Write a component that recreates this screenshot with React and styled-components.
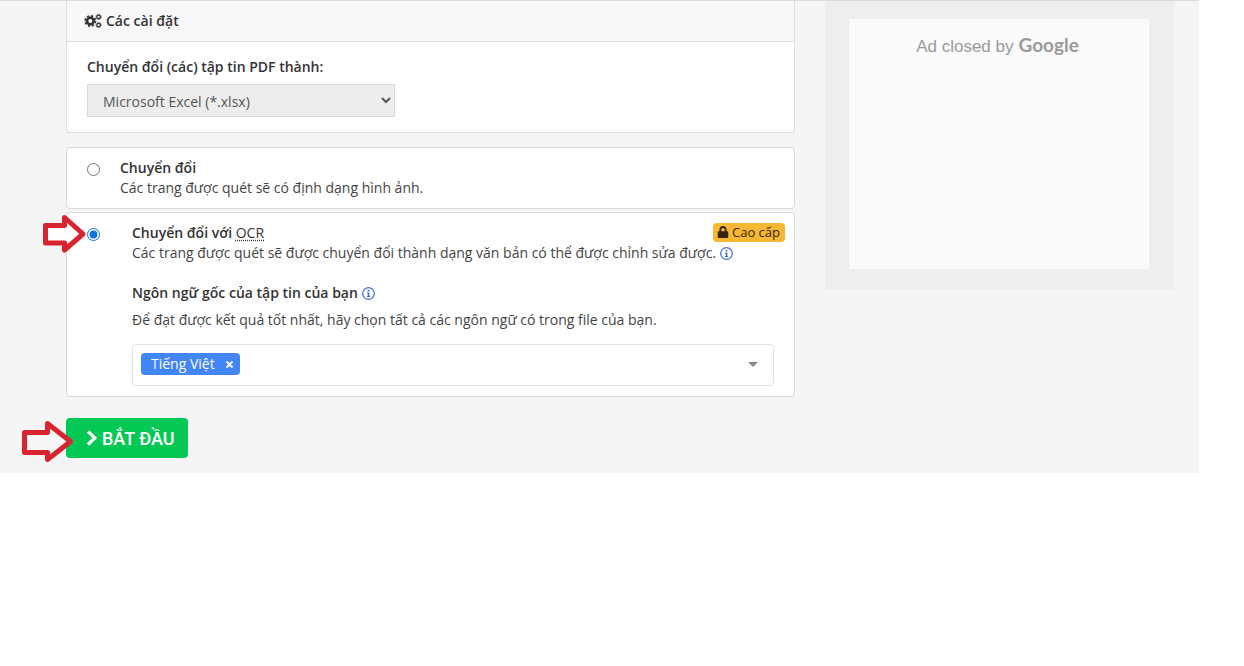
import { useState } from "react";
import styled, { createGlobalStyle } from "styled-components";
import { FaLock } from "react-icons/fa";

const GlobalStyle = createGlobalStyle`
  *, *::before, *::after {
    box-sizing: border-box;
  }
  body {
    margin: 0;
    background: #fff;
    color: #333;
    font-family: "Open Sans", "Noto Sans", sans-serif;
    font-size: 14px;
    line-height: 20px;
  }
`;

const Page = styled.div`
  display: grid;
  grid-template-columns: minmax(0, 1fr) 349px;
  gap: 30px;
  align-items: start;
  margin-right: 45px;
  padding: 0 25px 15px 66px;
  border-top: 1px solid #dadada;
  background: #f5f5f5;
`;

const Panel = styled.section`
  margin-bottom: 14px;
  border: 1px solid #dedede;
  border-top: 0;
  border-radius: 0 0 4px 4px;
  background: #fff;
`;

const PanelHeader = styled.h2`
  display: flex;
  align-items: center;
  gap: 4px;
  margin: 0;
  padding: 10px 17px;
  border-bottom: 1px solid #dedede;
  background: #f8f8f8;
  font-size: 14px;
  font-weight: 600;
`;

const PanelBody = styled.div`
  padding: 15px 20px;
`;

const FieldLabel = styled.label`
  display: block;
  margin-bottom: 7px;
  font-weight: 600;
`;

const Select = styled.select`
  display: block;
  width: 308px;
  max-width: 100%;
  height: 33px;
  padding: 1px 0 0 11px;
  border: 1px solid #d9d9d9;
  border-radius: 0;
  background: #ededed;
  color: #555;
  font: inherit;
`;

const Card = styled.div`
  position: relative;
  display: flex;
  align-items: flex-start;
  gap: ${({ $gap }) => $gap}px;
  margin-bottom: 3px;
  padding: 10px 9px 10px 20px;
  border: 1px solid #dadada;
  border-radius: 4px;
  background: #fff;
`;

const Radio = styled.input`
  flex: none;
  width: 13px;
  height: 13px;
  margin: 5px 0 0;
  accent-color: #1371e0;
`;

const CardBody = styled.div`
  flex: 1;
  min-width: 0;
`;

const TitleRow = styled.div`
  display: flex;
  align-items: flex-start;
  justify-content: space-between;
  height: 20px;
`;

const Title = styled.label`
  font-weight: 600;
  abbr {
    font-weight: 500;
    text-decoration: underline dotted;
    text-underline-offset: 2px;
  }
`;

const Text = styled.p`
  margin: 0;
  color: #444;
`;

const Badge = styled.span`
  display: inline-flex;
  align-items: center;
  gap: 3px;
  height: 19px;
  padding: 0 5px 1px 4px;
  border-radius: 4px;
  background: #f7b733;
  color: #33260b;
  font-size: 13px;
  svg {
    font-size: 12px;
  }
`;

const InfoButton = styled.button`
  display: inline-flex;
  margin: 0 0 0 4px;
  padding: 0;
  border: 0;
  background: none;
  color: #4577cf;
  vertical-align: -2px;
`;

const Language = styled.div`
  margin: 20px 11px 0 0;
`;

const LanguageTitle = styled.div`
  margin-bottom: 7px;
  font-weight: 600;
`;

const TagBox = styled.div`
  display: flex;
  align-items: center;
  justify-content: space-between;
  height: 42px;
  margin-top: 14px;
  padding: 0 15px 2px 8px;
  border: 1px solid #e3e3e3;
  border-radius: 4px;
`;

const Tag = styled.span`
  display: inline-flex;
  align-items: center;
  gap: 10px;
  height: 22px;
  padding: 0 6px 0 10px;
  border-radius: 4px;
  background: #4285f4;
  color: #fff;
`;

const TagRemove = styled.button`
  display: flex;
  padding: 0;
  border: 0;
  background: none;
  color: #fff;
`;

const DropButton = styled.button`
  display: flex;
  padding: 0;
  border: 0;
  background: none;
  color: #888;
`;

const StartRow = styled.div`
  position: relative;
  display: flex;
  margin-top: 21px;
`;

const StartButton = styled.button`
  display: flex;
  align-items: center;
  gap: 4px;
  height: 40px;
  padding: 0 13px 0 20px;
  border: 0;
  border-radius: 4px;
  background: #03c853;
  color: #fff;
  font-family: Roboto, sans-serif;
  font-size: 18px;
  font-weight: 500;
`;

const Pointer = styled.svg`
  position: absolute;
  left: ${({ $left }) => $left}px;
  top: ${({ $top }) => $top}px;
  fill: ${({ $fill }) => $fill};
  stroke: #d9232e;
  stroke-width: 5;
  stroke-linejoin: round;
  pointer-events: none;
`;

const AdFrame = styled.aside`
  padding: 18px 25px 20px 24px;
  background: #eee;
`;

const Ad = styled.div`
  display: flex;
  align-items: baseline;
  justify-content: center;
  gap: 5px;
  height: 250px;
  padding: 16px 3px 0 0;
  background: #fafafa;
  color: #9a9a9a;
  font-family: "Liberation Sans", Arial, sans-serif;
  font-size: 17px;
`;

const Wordmark = styled.span`
  font-family: Lato, sans-serif;
  font-size: 19px;
  font-weight: 700;
`;

const Cogs = () => (
  <svg width="18" height="14" viewBox="0 0 18 14" fill="none" stroke="currentColor">
    <circle cx="6.300" cy="7" r="3.300" strokeWidth="2.600" />
    <circle cx="6.300" cy="7" r="5.100" strokeWidth="1.800" strokeDasharray="2.200 1.805" />
    <circle cx="14.600" cy="2.900" r="1.800" strokeWidth="1.300" />
    <circle cx="14.600" cy="2.900" r="2.600" strokeWidth="0.800" strokeDasharray="1.200 0.842" />
    <circle cx="14.600" cy="11.100" r="1.800" strokeWidth="1.300" />
    <circle cx="14.600" cy="11.100" r="2.600" strokeWidth="0.800" strokeDasharray="1.200 0.842" />
  </svg>
);

const Info = ({ label }) => (
  <InfoButton type="button" aria-label={label}>
    <svg width="13" height="13" viewBox="0 0 13 13" fill="none">
      <circle cx="6.5" cy="6.5" r="5.8" stroke="currentColor" strokeWidth="1.3" />
      <path
        d="M5.6 2.8h1.8v1.6H5.6zM5 5.4h2.4v3.6h.8v1H4.9V9h.8V6.4H5z"
        fill="currentColor"
      />
    </svg>
  </InfoButton>
);

const App = () => {
  const [mode, setMode] = useState("ocr");
  const [languages, setLanguages] = useState(["Tiếng Việt"]);

  return (
    <>
      <GlobalStyle />
      <Page>
        <main>
          <Panel>
            <PanelHeader>
              <Cogs />
              Các cài đặt
            </PanelHeader>
            <PanelBody>
              <FieldLabel htmlFor="format">
                Chuyển đổi (các) tập tin PDF thành:
              </FieldLabel>
              <Select id="format" defaultValue="xlsx">
                <option value="xlsx">Microsoft Excel (*.xlsx)</option>
              </Select>
            </PanelBody>
          </Panel>

          <Card $gap={20}>
            <Radio
              type="radio"
              name="mode"
              id="mode-plain"
              checked={mode === "plain"}
              onChange={() => setMode("plain")}
            />
            <CardBody>
              <TitleRow>
                <Title htmlFor="mode-plain">Chuyển đổi</Title>
              </TitleRow>
              <Text>Các trang được quét sẽ có định dạng hình ảnh.</Text>
            </CardBody>
          </Card>

          <Card $gap={32}>
            <Radio
              type="radio"
              name="mode"
              id="mode-ocr"
              checked={mode === "ocr"}
              onChange={() => setMode("ocr")}
            />
            <CardBody>
              <TitleRow>
                <Title htmlFor="mode-ocr">
                  Chuyển đổi với <abbr>OCR</abbr>
                </Title>
                <Badge>
                  <FaLock />
                  Cao cấp
                </Badge>
              </TitleRow>
              <Text>
                Các trang được quét sẽ được chuyển đổi thành dạng văn bản có thể
                được chỉnh sửa được.
                <Info label="OCR" />
              </Text>
              <Language>
                <LanguageTitle>
                  Ngôn ngữ gốc của tập tin của bạn
                  <Info label="Ngôn ngữ" />
                </LanguageTitle>
                <Text>
                  Để đạt được kết quả tốt nhất, hãy chọn tất cả các ngôn ngữ có
                  trong file của bạn.
                </Text>
                <TagBox>
                  <div>
                    {languages.map((lang) => (
                      <Tag key={lang}>
                        {lang}
                        <TagRemove
                          type="button"
                          aria-label={lang}
                          onClick={() =>
                            setLanguages(languages.filter((l) => l !== lang))
                          }
                        >
                          <svg width="9" height="9" viewBox="0 0 9 9">
                            <path
                              d="M1.5 1.5l6 6m0-6l-6 6"
                              stroke="currentColor"
                              strokeWidth="1.8"
                            />
                          </svg>
                        </TagRemove>
                      </Tag>
                    ))}
                  </div>
                  <DropButton type="button" aria-label="Ngôn ngữ">
                    <svg width="10" height="5" viewBox="0 0 10 5">
                      <path d="M0 0h10L5 5z" fill="currentColor" />
                    </svg>
                  </DropButton>
                </TagBox>
              </Language>
            </CardBody>
            <Pointer $left={-25} $top={0} $fill="#fff" width="44" height="42">
              <path d="M3.5 12.5h19v-8L41 21 22.5 37v-7h-19z" />
            </Pointer>
          </Card>

          <StartRow>
            <StartButton type="button">
              <svg width="12" height="16" viewBox="0 0 12 16" fill="none">
                <path d="M2 1.5L8.8 8 2 14.5" stroke="currentColor" strokeWidth="3.2" />
              </svg>
              BẮT ĐẦU
            </StartButton>
            <Pointer $left={-46} $top={2} $fill="#f7f7f7" width="56" height="44">
              <path d="M4.5 12.5h23v-9L50.5 21.5 27.5 39.5v-7h-23z" />
            </Pointer>
          </StartRow>
        </main>

        <AdFrame>
          <Ad>
            <span>Ad closed by</span>
            <Wordmark>Google</Wordmark>
          </Ad>
        </AdFrame>
      </Page>
    </>
  );
};

export default App;
